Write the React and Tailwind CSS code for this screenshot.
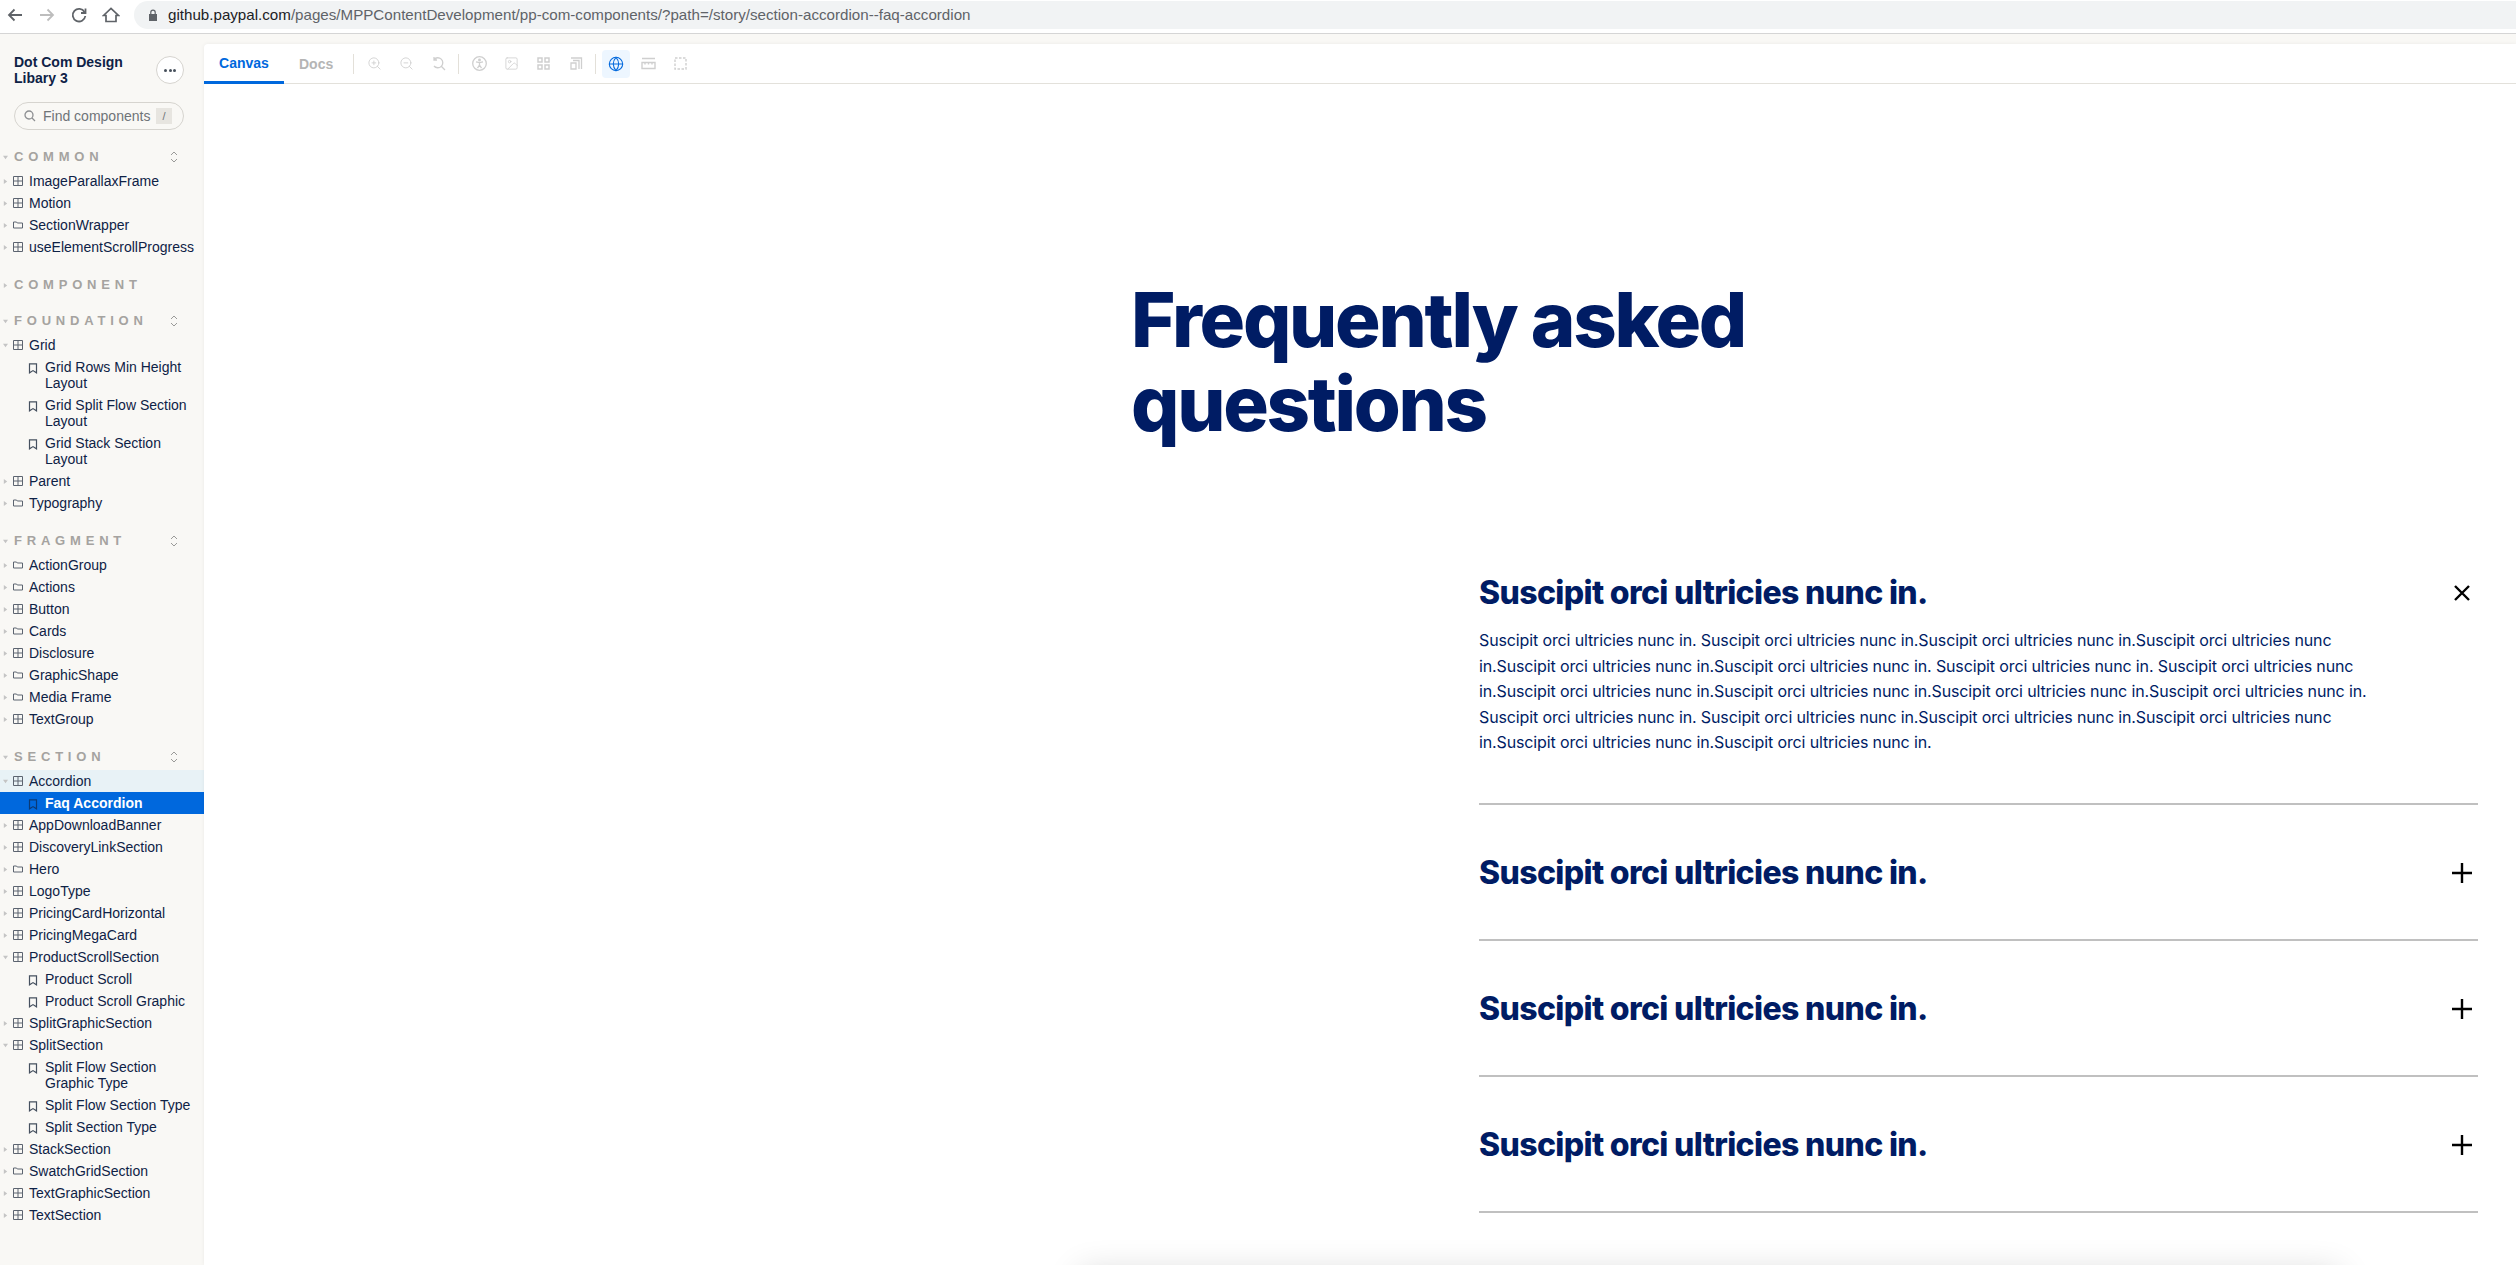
import { ZoomIn, ZoomOut, Image, Globe } from 'lucide-react'

const sections = [
  {
    title: 'COMMON',
    open: true,
    items: [
      { name: 'ImageParallaxFrame', icon: 'comp' },
      { name: 'Motion', icon: 'comp' },
      { name: 'SectionWrapper', icon: 'folder' },
      { name: 'useElementScrollProgress', icon: 'comp' },
    ],
  },
  { title: 'COMPONENT', open: false, items: [] },
  {
    title: 'FOUNDATION',
    open: true,
    items: [
      { name: 'Grid', icon: 'comp', open: true },
      { name: 'Grid Rows Min Height Layout', story: true },
      { name: 'Grid Split Flow Section Layout', story: true },
      { name: 'Grid Stack Section Layout', story: true },
      { name: 'Parent', icon: 'comp' },
      { name: 'Typography', icon: 'folder' },
    ],
  },
  {
    title: 'FRAGMENT',
    open: true,
    items: [
      { name: 'ActionGroup', icon: 'folder' },
      { name: 'Actions', icon: 'folder' },
      { name: 'Button', icon: 'comp' },
      { name: 'Cards', icon: 'folder' },
      { name: 'Disclosure', icon: 'comp' },
      { name: 'GraphicShape', icon: 'folder' },
      { name: 'Media Frame', icon: 'folder' },
      { name: 'TextGroup', icon: 'comp' },
    ],
  },
  {
    title: 'SECTION',
    open: true,
    items: [
      { name: 'Accordion', icon: 'comp', open: true, parent: true },
      { name: 'Faq Accordion', story: true, selected: true },
      { name: 'AppDownloadBanner', icon: 'comp' },
      { name: 'DiscoveryLinkSection', icon: 'comp' },
      { name: 'Hero', icon: 'folder' },
      { name: 'LogoType', icon: 'comp' },
      { name: 'PricingCardHorizontal', icon: 'comp' },
      { name: 'PricingMegaCard', icon: 'comp' },
      { name: 'ProductScrollSection', icon: 'comp', open: true },
      { name: 'Product Scroll', story: true },
      { name: 'Product Scroll Graphic', story: true },
      { name: 'SplitGraphicSection', icon: 'comp' },
      { name: 'SplitSection', icon: 'comp', open: true },
      { name: 'Split Flow Section Graphic Type', story: true },
      { name: 'Split Flow Section Type', story: true },
      { name: 'Split Section Type', story: true },
      { name: 'StackSection', icon: 'comp' },
      { name: 'SwatchGridSection', icon: 'folder' },
      { name: 'TextGraphicSection', icon: 'comp' },
      { name: 'TextSection', icon: 'comp' },
    ],
  },
]

const bodyLines = [
  'Suscipit orci ultricies nunc in. Suscipit orci ultricies nunc in.Suscipit orci ultricies nunc in.Suscipit orci ultricies nunc',
  'in.Suscipit orci ultricies nunc in.Suscipit orci ultricies nunc in. Suscipit orci ultricies nunc in. Suscipit orci ultricies nunc',
  'in.Suscipit orci ultricies nunc in.Suscipit orci ultricies nunc in.Suscipit orci ultricies nunc in.Suscipit orci ultricies nunc in.',
  'Suscipit orci ultricies nunc in. Suscipit orci ultricies nunc in.Suscipit orci ultricies nunc in.Suscipit orci ultricies nunc',
  'in.Suscipit orci ultricies nunc in.Suscipit orci ultricies nunc in.',
]

function Caret({ open }) {
  return (
    <svg width="5" height="5" viewBox="0 0 6 6" className="shrink-0 text-[#c4c4c4]" fill="currentColor">
      {open ? <path d="M0 1h6L3 5z" /> : <path d="M1 0l4 3-4 3z" />}
    </svg>
  )
}

function TreeIcon({ type }) {
  if (type === 'folder') {
    return (
      <svg width="10" height="10" viewBox="0 0 10 10" fill="none" stroke="#5c6470" strokeWidth="1" className="shrink-0">
        <path d="M.5 2h3l.8 1h5.2v5H.5z" />
      </svg>
    )
  }
  return (
    <svg width="10" height="10" viewBox="0 0 10 10" fill="none" stroke="#5c6470" strokeWidth="1" className="shrink-0">
      <path d="M.5.5h9v9h-9zM5 .5v9M.5 5h9" />
    </svg>
  )
}

function BookmarkIcon({ selected }) {
  return (
    <svg width="10" height="11" viewBox="0 0 10 11" fill="none" stroke={selected ? '#0b3a75' : '#45505f'} strokeWidth="1.2" className="shrink-0 mt-[4px]">
      <path d="M1.5.8h7v9L5 7.6 1.5 9.8z" />
    </svg>
  )
}

function TreeRow({ item }) {
  if (item.story) {
    return (
      <div className={`flex gap-[7px] pl-[28px] py-[3px] text-[14px] leading-[16px] ${item.selected ? 'bg-[#0068dd] text-white font-bold' : 'text-[#0e2246]'}`}>
        <BookmarkIcon selected={item.selected} />
        <span className="w-[152px]">{item.name}</span>
      </div>
    )
  }
  return (
    <div className={`flex items-center py-[3px] pl-[3px] text-[14px] leading-[16px] text-[#0e2246] ${item.parent ? 'bg-[#e8f2f6]' : ''}`}>
      <Caret open={item.open} />
      <span className="ml-[5px] mr-[6px] flex"><TreeIcon type={item.icon} /></span>
      <span className="whitespace-nowrap">{item.name}</span>
    </div>
  )
}

function Sidebar() {
  return (
    <aside className="w-[204px] shrink-0 bg-[#f9f8f5] pt-[20px]">
      <div className="flex items-center justify-between pl-[14px] pr-[20px] h-[32px]">
        <div className="text-[14px] leading-[16px] font-bold text-[#0e2246]">Dot Com Design<br />Libary 3</div>
        <button className="w-[28px] h-[28px] rounded-full border border-[#d6d4cf] bg-white flex items-center justify-center gap-[1.5px]">
          <span className="w-[3px] h-[3px] rounded-full bg-[#47505c]" />
          <span className="w-[3px] h-[3px] rounded-full bg-[#47505c]" />
          <span className="w-[3px] h-[3px] rounded-full bg-[#47505c]" />
        </button>
      </div>
      <div className="mx-[14px] mr-[20px] mt-[16px] h-[28px] rounded-full border border-[#d6d4cf] flex items-center pl-[9px] pr-[11px]">
        <svg width="12" height="12" viewBox="0 0 12 12" fill="none" stroke="#8d8f92" strokeWidth="1.3" className="shrink-0">
          <circle cx="5" cy="5" r="4" />
          <path d="M8 8l3 3" />
        </svg>
        <span className="ml-[7px] text-[14px] text-[#6f7478] whitespace-nowrap">Find components</span>
        <span className="ml-auto w-[16px] h-[16px] bg-[#e7e5e0] text-[#6f7478] text-[11px] leading-[16px] text-center">/</span>
      </div>
      <div className="mt-[16px]">
        {sections.map((section) => (
          <div key={section.title} className={section.open ? 'mb-[16px]' : 'mb-[14px]'}>
            <div className="h-[22px] flex items-center pl-[3px] pr-[26px]">
              <Caret open={section.open} />
              <span className="ml-[6px] text-[13px] font-bold tracking-[4.8px] text-[#a5a3a0] whitespace-nowrap">{section.title}</span>
              {section.open && (
                <svg width="8" height="12" viewBox="0 0 8 12" fill="none" stroke="#9a9a98" strokeWidth="1" className="ml-auto">
                  <path d="M1 4l3-3 3 3M1 8l3 3 3-3" />
                </svg>
              )}
            </div>
            {section.items.length > 0 && (
              <div className="mt-[2px]">
                {section.items.map((item) => <TreeRow key={item.name} item={item} />)}
              </div>
            )}
          </div>
        ))}
      </div>
    </aside>
  )
}

function ToolIcon({ children, active }) {
  return (
    <div className={`w-[28px] h-[28px] flex items-center justify-center rounded-[4px] ${active ? 'bg-[#edf6ff] text-[#0068dd]' : 'text-[#cfcfcf]'}`}>
      {children}
    </div>
  )
}

const ToolSep = () => <div className="w-px h-[20px] bg-[#e3e0d9] mx-[6px]" />

function Toolbar() {
  const s = { width: 15, height: 15, fill: 'none', stroke: 'currentColor', strokeWidth: 1.3 }
  return (
    <div className="h-[40px] border-b border-[#e3e1db] flex items-center shrink-0">
      <div className="w-[80px] h-[40px] pt-[3px] border-b-[3px] border-[#0068dd] flex items-center justify-center text-[14px] font-bold text-[#0068dd]">Canvas</div>
      <div className="ml-[15px] pt-[1px] text-[14px] font-bold text-[#b5b5b5]">Docs</div>
      <div className="ml-[14px] flex items-center">
        <ToolSep />
        <ToolIcon><ZoomIn size={15} strokeWidth={1.4} /></ToolIcon>
        <div className="ml-[4px]"><ToolIcon><ZoomOut size={15} strokeWidth={1.4} /></ToolIcon></div>
        <div className="ml-[4px]">
          <ToolIcon>
            <svg viewBox="0 0 15 15" {...s}>
              <path d="M3 3.5A5 5 0 1 1 3 10M3 1v3h3M10.5 10.5L14 14" />
            </svg>
          </ToolIcon>
        </div>
        <ToolSep />
        <ToolIcon>
          <svg viewBox="0 0 15 15" {...s}>
            <circle cx="7.5" cy="7.5" r="6.8" />
            <circle cx="7.5" cy="4" r=".8" fill="currentColor" />
            <path d="M4 5.8l3.5.8 3.5-.8M7.5 6.6v2.4M7.5 9l-2 3.2M7.5 9l2 3.2" />
          </svg>
        </ToolIcon>
        <div className="ml-[4px]"><ToolIcon><Image size={15} strokeWidth={1.3} /></ToolIcon></div>
        <div className="ml-[4px]">
          <ToolIcon>
            <svg viewBox="0 0 15 15" {...s} strokeWidth="1.5">
              <path d="M2 2h4v4H2zM9 2h4v4H9zM2 9h4v4H2zM9 9h4v4H9z" />
            </svg>
          </ToolIcon>
        </div>
        <div className="ml-[4px]">
          <ToolIcon>
            <svg viewBox="0 0 15 15" {...s}>
              <path d="M3 13V7h5v6zM5 4.500h6V13M3 2h10.500v11" />
            </svg>
          </ToolIcon>
        </div>
        <ToolSep />
        <ToolIcon active><Globe size={16} strokeWidth={1.6} /></ToolIcon>
        <div className="ml-[4px]">
          <ToolIcon>
            <svg viewBox="0 0 15 15" {...s} strokeWidth="1.4">
              <path d="M1 2.500h13M1 6.500h13v6H1zM4 6.500v2M7.500 6.500v2M11 6.500v2" />
            </svg>
          </ToolIcon>
        </div>
        <div className="ml-[4px]">
          <ToolIcon>
            <svg viewBox="0 0 15 15" {...s} strokeWidth="1.4" strokeDasharray="2.500 1.500">
              <path d="M2 2h11v11H2z" />
            </svg>
          </ToolIcon>
        </div>
      </div>
    </div>
  )
}

function AccordionItem({ open }) {
  return (
    <div className="border-b-2 border-[#c0c0c0] pt-[49px] pb-[47px]">
      <div className="flex items-center justify-between h-[38px]">
        <h3 className="font-['Inter',sans-serif] text-[32px] leading-[38px] font-extrabold tracking-[-0.02em] text-[#001c64]">Suscipit orci ultricies nunc in.</h3>
        <span className="w-[32px] flex justify-center text-black">
          {open ? (
            <svg width="18" height="18" viewBox="0 0 18 18" fill="none" stroke="currentColor" strokeWidth="2.4"><path d="M2 2l14 14M16 2L2 16" /></svg>
          ) : (
            <svg width="20" height="20" viewBox="0 0 20 20" fill="none" stroke="currentColor" strokeWidth="2.4"><path d="M10 0v20M0 10h20" /></svg>
          )}
        </span>
      </div>
      {open && (
        <div className="mt-[16px] font-['Inter',sans-serif] text-[16px] leading-[25.6px] tracking-[-0.13px] text-[#001c64]">
          {bodyLines.map((line, i) => <div key={i} className="whitespace-nowrap">{line}</div>)}
        </div>
      )}
    </div>
  )
}

export default function App() {
  return (
    <div className="relative w-[2516px] h-[1265px] overflow-hidden bg-white font-['Liberation_Sans',Arial,sans-serif] flex flex-col">
      {/* browser bar */}
      <div className="h-[34px] shrink-0 border-b border-[#d5d5d5] bg-white flex items-start pt-[1px]">
        <div className="w-[134px] h-[28px] flex items-center pl-[6px] gap-[14px] text-[#5f6368]">
          <svg width="18" height="18" viewBox="0 0 18 18" fill="none" stroke="currentColor" strokeWidth="1.8"><path d="M16 9H3M8.500 3.500L3 9l5.500 5.500" /></svg>
          <svg width="18" height="18" viewBox="0 0 18 18" fill="none" stroke="#bdbdbd" strokeWidth="1.8"><path d="M2 9h13M9.500 3.500L15 9l-5.500 5.500" /></svg>
          <svg width="18" height="18" viewBox="0 0 18 18" fill="none" stroke="currentColor" strokeWidth="1.8"><path d="M14.500 6A6.300 6.300 0 1 0 15.300 10" /><path d="M15.500 2.500v4.500H11" /></svg>
          <svg width="18" height="18" viewBox="0 0 18 18" fill="none" stroke="currentColor" strokeWidth="1.7"><path d="M1.500 9.500L9 2.500l7.500 7H14v6H4v-6z" /></svg>
        </div>
        <div className="flex-1 h-[28px] rounded-l-full bg-[#f1f3f4] flex items-center pl-[13px] text-[15.15px] whitespace-nowrap">
          <svg width="12" height="12" viewBox="0 0 12 12" fill="#5f6368"><path d="M2 5h8v7H2z" /><path d="M3.800 5V3.300a2.200 2.200 0 0 1 4.400 0V5" fill="none" stroke="#5f6368" strokeWidth="1.200" /></svg>
          <span className="ml-[9px] text-[#202124]">github.paypal.com</span>
          <span className="text-[#5f6368]">/pages/MPPContentDevelopment/pp-com-components/?path=/story/section-accordion--faq-accordion</span>
        </div>
      </div>

      <div className="flex-1 flex min-h-0 bg-[#f9f8f5]">
        <Sidebar />
        <main className="flex-1 mt-[10px] bg-white rounded-tl-[4px] flex flex-col min-w-0 shadow-[0_0_4px_rgba(0,0,0,0.06)]">
          <Toolbar />
          <div className="flex-1 pl-[927px] pr-[38px] pt-[193px]">
            <h1 className="font-['Inter',sans-serif] text-[76px] leading-[84px] font-extrabold tracking-[-0.03em] text-[#001c64] w-[800px]">Frequently asked questions</h1>
            <div className="pl-[348px] mt-[80px]">
              <AccordionItem open />
              <AccordionItem />
              <AccordionItem />
              <AccordionItem />
            </div>
          </div>
        </main>
      </div>

      {/* card shadow peeking from below the fold */}
      <div className="absolute left-[1080px] top-[1272px] w-[1260px] h-[100px] bg-white shadow-[0_0_32px_rgba(0,0,0,0.16)]" />
    </div>
  )
}
